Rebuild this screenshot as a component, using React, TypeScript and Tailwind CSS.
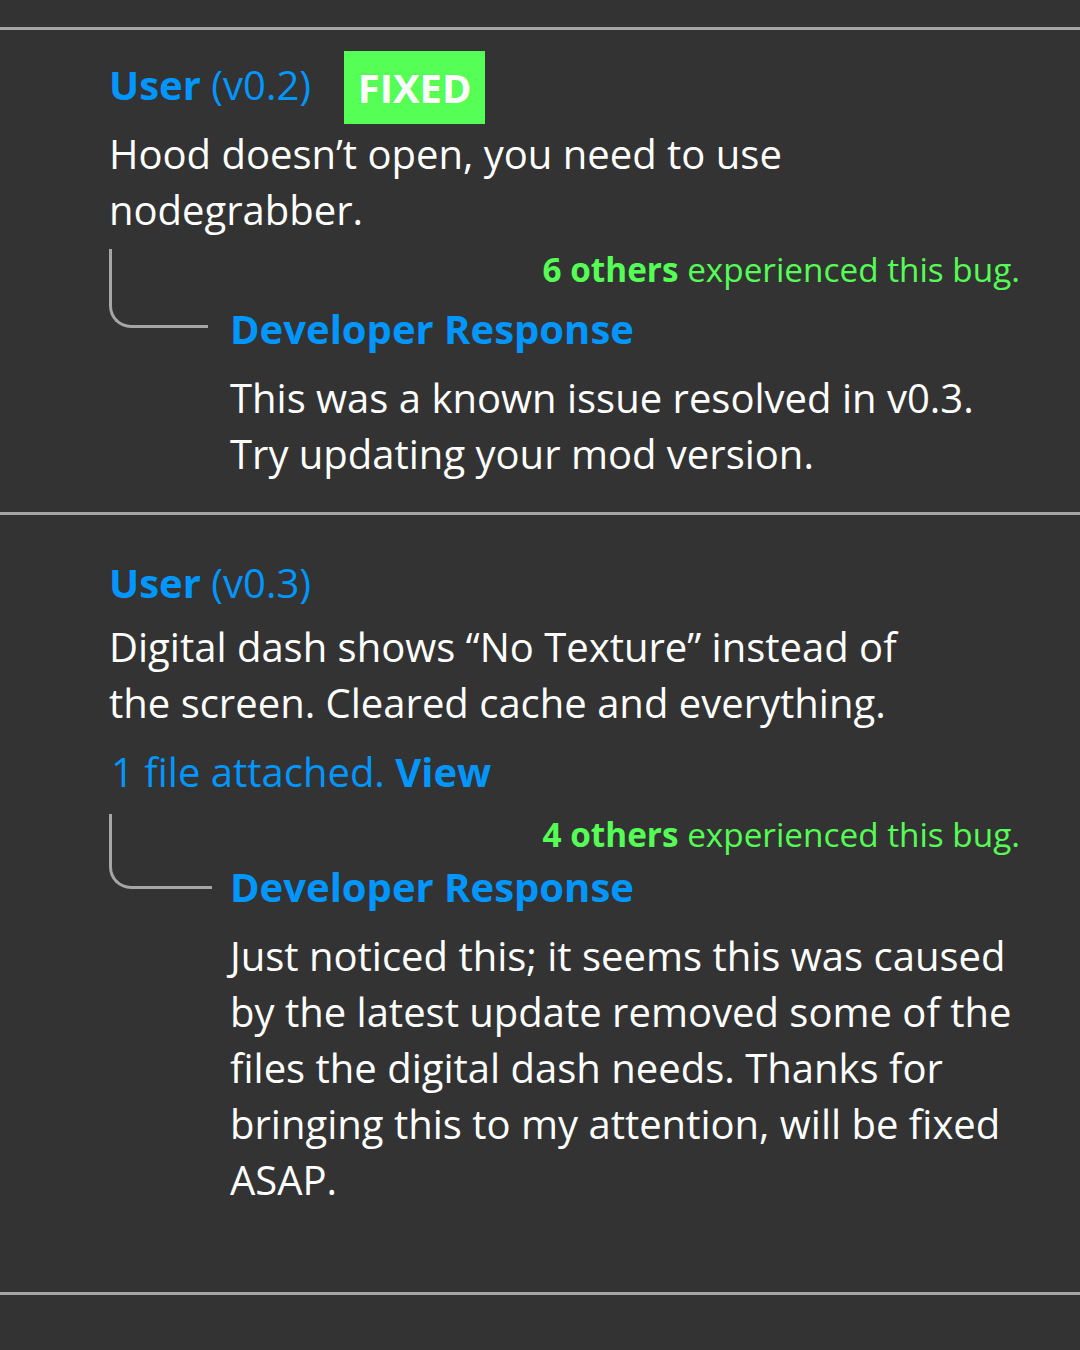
const font = { fontFamily: '"Open Sans", "Noto Sans", sans-serif' };

type Report = {
  version: string;
  fixed?: boolean;
  body: string[];
  attachment?: boolean;
  others: number;
  response: string[];
};

const reports: Report[] = [
  {
    version: "v0.2",
    fixed: true,
    body: ["Hood doesn\u2019t open, you need to use", "nodegrabber."],
    others: 6,
    response: ["This was a known issue resolved in v0.3.", "Try updating your mod version."],
  },
  {
    version: "v0.3",
    body: ["Digital dash shows \u201cNo Texture\u201d instead of", "the screen. Cleared cache and everything."],
    attachment: true,
    others: 4,
    response: [
      "Just noticed this; it seems this was caused",
      "by the latest update removed some of the",
      "files the digital dash needs. Thanks for",
      "bringing this to my attention, will be fixed",
      "ASAP.",
    ],
  },
];

const Divider = () => <div className="h-[3px] w-full bg-[#a6a6a6]" />;

const ReportCard = ({ report, first }: { report: Report; first: boolean }) => (
  <div className={`pl-[109px] pr-[60px] ${first ? "pt-[21px] pb-[30px]" : "pt-[31px] pb-[84px]"}`}>
    <div className="flex h-[73px] items-center gap-[33px]">
      <div className={`${first ? "-mt-[6px]" : "mt-0"} text-[40px] leading-[56px] text-[#0096ff]`}>
        <span className="font-bold">User</span> ({report.version})
      </div>
      {report.fixed && (
        <div className="flex h-[73px] w-[141px] items-center justify-center bg-[#55ff55] text-[40px] font-bold text-white">
          FIXED
        </div>
      )}
    </div>

    <p className={`text-[40px] leading-[56px] text-white ${first ? "mt-[2px]" : "mt-0"}`}>
      {report.body.map((line, i) => (
        <span key={i} className="block">{line}</span>
      ))}
    </p>

    {report.attachment && (
      <p className="mt-[13px] pl-[2px] text-[40px] leading-[56px] text-[#0096ff]">
        1 file attached. <span className="font-bold">View</span>
      </p>
    )}

    <div className={`grid grid-cols-[121px_1fr] ${first ? "mt-[11px]" : "mt-[14px]"}`}>
      <div className={`${first ? "w-[99px] h-[79px]" : "w-[103px] h-[75px]"} border-b-[3px] border-l-[3px] border-[#a6a6a6] rounded-bl-[22px]`} />
      <div>
        <p className="text-right text-[33.3px] leading-[40px] text-[#55ff55]">
          <span className="font-bold">{report.others} others</span> experienced this bug.
        </p>
        <h3 className={`${first ? "mt-[18px]" : "mt-[11px]"} text-[40px] font-bold leading-[44px] text-[#0096ff]`}>
          Developer Response
        </h3>
        <p className="mt-[19px] text-[40px] leading-[56px] text-white">
          {report.response.map((line, i) => (
            <span key={i} className="block">{line}</span>
          ))}
        </p>
      </div>
    </div>
  </div>
);

export default function App() {
  return (
    <div className="min-h-[1350px] w-full bg-[#333333]" style={font}>
      <div className="h-[27px]" />
      <Divider />
      {reports.map((r, i) => (
        <div key={r.version}>
          <ReportCard report={r} first={i === 0} />
          <Divider />
        </div>
      ))}
    </div>
  );
}
